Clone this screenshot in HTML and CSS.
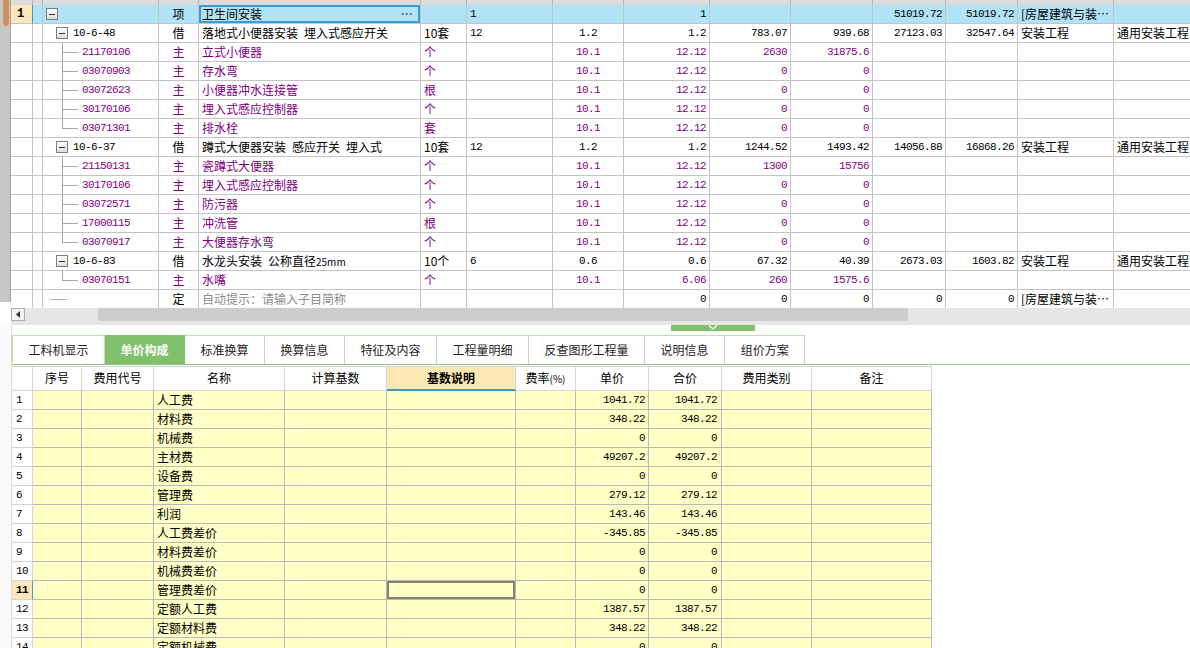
FILE: index.html
```html
<!DOCTYPE html>
<html lang="zh-CN">
<head>
<meta charset="utf-8">
<title>单价构成</title>
<link rel="stylesheet" href="styles.css">
</head>
<body>
<div class="top">
  <div class="vstrip"><div class="vthumb"></div></div>
  <div class="topmain">
    <div class="grid">
      <div class="ghead"><div></div><div></div><div></div><div></div><div></div><div></div><div></div><div></div><div></div><div></div><div></div><div></div><div></div><div></div><div></div></div>

      <div class="grow sel">
        <div class="c rn cur">1</div><div class="c"></div>
        <div class="c tree"><span class="box i1"></span></div>
        <div class="c ty">项</div>
        <div class="c nm edit"><span>卫生间安装</span><span class="dots">···</span></div>
        <div class="c"></div><div class="c num">1</div><div class="c"></div>
        <div class="c num r">1</div><div class="c"></div><div class="c"></div>
        <div class="c num r">51019.72</div><div class="c num r">51019.72</div>
        <div class="c">[房屋建筑与装…</div><div class="c"></div>
      </div>

      <div class="grow">
        <div class="c rn"></div><div class="c"></div>
        <div class="c tree"><span class="box i2"></span><span class="code">10-6-48</span></div>
        <div class="c ty">借</div>
        <div class="c">落地式小便器安装&ensp;埋入式感应开关</div>
        <div class="c">10套</div><div class="c num">12</div><div class="c num m">1.2</div>
        <div class="c num r">1.2</div><div class="c num r">783.07</div><div class="c num r">939.68</div>
        <div class="c num r">27123.03</div><div class="c num r">32547.64</div>
        <div class="c">安装工程</div><div class="c">通用安装工程</div>
      </div>

      <div class="grow sub">
        <div class="c rn"></div><div class="c"></div>
        <div class="c tree"><span class="br"></span><span class="code">21170106</span></div>
        <div class="c ty">主</div><div class="c">立式小便器</div><div class="c">个</div><div class="c"></div>
        <div class="c num m">10.1</div><div class="c num r">12.12</div><div class="c num r">2630</div><div class="c num r">31875.6</div>
        <div class="c"></div><div class="c"></div><div class="c"></div><div class="c"></div>
      </div>
      <div class="grow sub">
        <div class="c rn"></div><div class="c"></div>
        <div class="c tree"><span class="br"></span><span class="code">03070903</span></div>
        <div class="c ty">主</div><div class="c">存水弯</div><div class="c">个</div><div class="c"></div>
        <div class="c num m">10.1</div><div class="c num r">12.12</div><div class="c num r">0</div><div class="c num r">0</div>
        <div class="c"></div><div class="c"></div><div class="c"></div><div class="c"></div>
      </div>
      <div class="grow sub">
        <div class="c rn"></div><div class="c"></div>
        <div class="c tree"><span class="br"></span><span class="code">03072623</span></div>
        <div class="c ty">主</div><div class="c">小便器冲水连接管</div><div class="c">根</div><div class="c"></div>
        <div class="c num m">10.1</div><div class="c num r">12.12</div><div class="c num r">0</div><div class="c num r">0</div>
        <div class="c"></div><div class="c"></div><div class="c"></div><div class="c"></div>
      </div>
      <div class="grow sub">
        <div class="c rn"></div><div class="c"></div>
        <div class="c tree"><span class="br"></span><span class="code">30170106</span></div>
        <div class="c ty">主</div><div class="c">埋入式感应控制器</div><div class="c">个</div><div class="c"></div>
        <div class="c num m">10.1</div><div class="c num r">12.12</div><div class="c num r">0</div><div class="c num r">0</div>
        <div class="c"></div><div class="c"></div><div class="c"></div><div class="c"></div>
      </div>
      <div class="grow sub">
        <div class="c rn"></div><div class="c"></div>
        <div class="c tree"><span class="br last"></span><span class="code">03071301</span></div>
        <div class="c ty">主</div><div class="c">排水栓</div><div class="c">套</div><div class="c"></div>
        <div class="c num m">10.1</div><div class="c num r">12.12</div><div class="c num r">0</div><div class="c num r">0</div>
        <div class="c"></div><div class="c"></div><div class="c"></div><div class="c"></div>
      </div>

      <div class="grow">
        <div class="c rn"></div><div class="c"></div>
        <div class="c tree"><span class="box i2"></span><span class="code">10-6-37</span></div>
        <div class="c ty">借</div>
        <div class="c">蹲式大便器安装&ensp;感应开关&ensp;埋入式</div>
        <div class="c">10套</div><div class="c num">12</div><div class="c num m">1.2</div>
        <div class="c num r">1.2</div><div class="c num r">1244.52</div><div class="c num r">1493.42</div>
        <div class="c num r">14056.88</div><div class="c num r">16868.26</div>
        <div class="c">安装工程</div><div class="c">通用安装工程</div>
      </div>

      <div class="grow sub">
        <div class="c rn"></div><div class="c"></div>
        <div class="c tree"><span class="br"></span><span class="code">21150131</span></div>
        <div class="c ty">主</div><div class="c">瓷蹲式大便器</div><div class="c">个</div><div class="c"></div>
        <div class="c num m">10.1</div><div class="c num r">12.12</div><div class="c num r">1300</div><div class="c num r">15756</div>
        <div class="c"></div><div class="c"></div><div class="c"></div><div class="c"></div>
      </div>
      <div class="grow sub">
        <div class="c rn"></div><div class="c"></div>
        <div class="c tree"><span class="br"></span><span class="code">30170106</span></div>
        <div class="c ty">主</div><div class="c">埋入式感应控制器</div><div class="c">个</div><div class="c"></div>
        <div class="c num m">10.1</div><div class="c num r">12.12</div><div class="c num r">0</div><div class="c num r">0</div>
        <div class="c"></div><div class="c"></div><div class="c"></div><div class="c"></div>
      </div>
      <div class="grow sub">
        <div class="c rn"></div><div class="c"></div>
        <div class="c tree"><span class="br"></span><span class="code">03072571</span></div>
        <div class="c ty">主</div><div class="c">防污器</div><div class="c">个</div><div class="c"></div>
        <div class="c num m">10.1</div><div class="c num r">12.12</div><div class="c num r">0</div><div class="c num r">0</div>
        <div class="c"></div><div class="c"></div><div class="c"></div><div class="c"></div>
      </div>
      <div class="grow sub">
        <div class="c rn"></div><div class="c"></div>
        <div class="c tree"><span class="br"></span><span class="code">17000115</span></div>
        <div class="c ty">主</div><div class="c">冲洗管</div><div class="c">根</div><div class="c"></div>
        <div class="c num m">10.1</div><div class="c num r">12.12</div><div class="c num r">0</div><div class="c num r">0</div>
        <div class="c"></div><div class="c"></div><div class="c"></div><div class="c"></div>
      </div>
      <div class="grow sub">
        <div class="c rn"></div><div class="c"></div>
        <div class="c tree"><span class="br last"></span><span class="code">03070917</span></div>
        <div class="c ty">主</div><div class="c">大便器存水弯</div><div class="c">个</div><div class="c"></div>
        <div class="c num m">10.1</div><div class="c num r">12.12</div><div class="c num r">0</div><div class="c num r">0</div>
        <div class="c"></div><div class="c"></div><div class="c"></div><div class="c"></div>
      </div>

      <div class="grow">
        <div class="c rn"></div><div class="c"></div>
        <div class="c tree"><span class="box i2"></span><span class="code">10-6-83</span></div>
        <div class="c ty">借</div>
        <div class="c">水龙头安装&ensp;公称直径<span class="mm">25mm</span></div>
        <div class="c">10个</div><div class="c num">6</div><div class="c num m">0.6</div>
        <div class="c num r">0.6</div><div class="c num r">67.32</div><div class="c num r">40.39</div>
        <div class="c num r">2673.03</div><div class="c num r">1603.82</div>
        <div class="c">安装工程</div><div class="c">通用安装工程</div>
      </div>

      <div class="grow sub">
        <div class="c rn"></div><div class="c"></div>
        <div class="c tree"><span class="br last"></span><span class="code">03070151</span></div>
        <div class="c ty">主</div><div class="c">水嘴</div><div class="c">个</div><div class="c"></div>
        <div class="c num m">10.1</div><div class="c num r">6.06</div><div class="c num r">260</div><div class="c num r">1575.6</div>
        <div class="c"></div><div class="c"></div><div class="c"></div><div class="c"></div>
      </div>

      <div class="grow">
        <div class="c rn"></div><div class="c"></div>
        <div class="c tree"><span class="br top"></span></div>
        <div class="c ty">定</div>
        <div class="c hint">自动提示：请输入子目简称</div>
        <div class="c"></div><div class="c"></div><div class="c"></div>
        <div class="c num r">0</div><div class="c num r">0</div><div class="c num r">0</div>
        <div class="c num r">0</div><div class="c num r">0</div>
        <div class="c">[房屋建筑与装…</div><div class="c"></div>
      </div>
    </div>
    <div class="hscroll">
      <div class="arrow"><svg width="6" height="7" viewBox="0 0 6 7"><path d="M5 0 L1 3.5 L5 7 Z" fill="#333"/></svg></div>
      <div class="hthumb"></div>
    </div>
  </div>
</div>

<div class="bottom">
  <div class="lstrip"></div>
  <div class="bmain">
    <div class="splitter">
      <div class="handle"><svg width="10" height="5" viewBox="0 0 10 5"><path d="M1 0.5 L5 4 L9 0.5" fill="none" stroke="#fff" stroke-width="1.2"/></svg></div>
    </div>
    <div class="tabs">
      <div class="tab">工料机显示</div>
      <div class="tab active">单价构成</div>
      <div class="tab">标准换算</div>
      <div class="tab">换算信息</div>
      <div class="tab">特征及内容</div>
      <div class="tab">工程量明细</div>
      <div class="tab">反查图形工程量</div>
      <div class="tab">说明信息</div>
      <div class="tab">组价方案</div>
    </div>
    <div class="ptable">
      <div class="phead">
        <div class="h"></div><div class="h">序号</div><div class="h">费用代号</div><div class="h">名称</div><div class="h">计算基数</div><div class="h hsel">基数说明</div><div class="h">费率<span class="pct">(%)</span></div><div class="h">单价</div><div class="h">合价</div><div class="h">费用类别</div><div class="h">备注</div>
      </div>
      <div class="prow"><div class="c rn">1</div><div class="c"></div><div class="c"></div><div class="c">人工费</div><div class="c"></div><div class="c"></div><div class="c"></div><div class="c num r">1041.72</div><div class="c num r2">1041.72</div><div class="c"></div><div class="c"></div></div>
      <div class="prow"><div class="c rn">2</div><div class="c"></div><div class="c"></div><div class="c">材料费</div><div class="c"></div><div class="c"></div><div class="c"></div><div class="c num r">348.22</div><div class="c num r2">348.22</div><div class="c"></div><div class="c"></div></div>
      <div class="prow"><div class="c rn">3</div><div class="c"></div><div class="c"></div><div class="c">机械费</div><div class="c"></div><div class="c"></div><div class="c"></div><div class="c num r">0</div><div class="c num r2">0</div><div class="c"></div><div class="c"></div></div>
      <div class="prow"><div class="c rn">4</div><div class="c"></div><div class="c"></div><div class="c">主材费</div><div class="c"></div><div class="c"></div><div class="c"></div><div class="c num r">49207.2</div><div class="c num r2">49207.2</div><div class="c"></div><div class="c"></div></div>
      <div class="prow"><div class="c rn">5</div><div class="c"></div><div class="c"></div><div class="c">设备费</div><div class="c"></div><div class="c"></div><div class="c"></div><div class="c num r">0</div><div class="c num r2">0</div><div class="c"></div><div class="c"></div></div>
      <div class="prow"><div class="c rn">6</div><div class="c"></div><div class="c"></div><div class="c">管理费</div><div class="c"></div><div class="c"></div><div class="c"></div><div class="c num r">279.12</div><div class="c num r2">279.12</div><div class="c"></div><div class="c"></div></div>
      <div class="prow"><div class="c rn">7</div><div class="c"></div><div class="c"></div><div class="c">利润</div><div class="c"></div><div class="c"></div><div class="c"></div><div class="c num r">143.46</div><div class="c num r2">143.46</div><div class="c"></div><div class="c"></div></div>
      <div class="prow"><div class="c rn">8</div><div class="c"></div><div class="c"></div><div class="c">人工费差价</div><div class="c"></div><div class="c"></div><div class="c"></div><div class="c num r">-345.85</div><div class="c num r2">-345.85</div><div class="c"></div><div class="c"></div></div>
      <div class="prow"><div class="c rn">9</div><div class="c"></div><div class="c"></div><div class="c">材料费差价</div><div class="c"></div><div class="c"></div><div class="c"></div><div class="c num r">0</div><div class="c num r2">0</div><div class="c"></div><div class="c"></div></div>
      <div class="prow"><div class="c rn">10</div><div class="c"></div><div class="c"></div><div class="c">机械费差价</div><div class="c"></div><div class="c"></div><div class="c"></div><div class="c num r">0</div><div class="c num r2">0</div><div class="c"></div><div class="c"></div></div>
      <div class="prow"><div class="c rn cur">11</div><div class="c"></div><div class="c"></div><div class="c">管理费差价</div><div class="c"></div><div class="c focus"></div><div class="c"></div><div class="c num r">0</div><div class="c num r2">0</div><div class="c"></div><div class="c"></div></div>
      <div class="prow"><div class="c rn">12</div><div class="c"></div><div class="c"></div><div class="c">定额人工费</div><div class="c"></div><div class="c"></div><div class="c"></div><div class="c num r">1387.57</div><div class="c num r2">1387.57</div><div class="c"></div><div class="c"></div></div>
      <div class="prow"><div class="c rn">13</div><div class="c"></div><div class="c"></div><div class="c">定额材料费</div><div class="c"></div><div class="c"></div><div class="c"></div><div class="c num r">348.22</div><div class="c num r2">348.22</div><div class="c"></div><div class="c"></div></div>
      <div class="prow"><div class="c rn">14</div><div class="c"></div><div class="c"></div><div class="c">定额机械费</div><div class="c"></div><div class="c"></div><div class="c"></div><div class="c num r">0</div><div class="c num r2">0</div><div class="c"></div><div class="c"></div></div>
    </div>
  </div>
</div>
</body>
</html>
```

FILE: styles.css
```css
* { box-sizing: border-box; }
html, body { margin: 0; padding: 0; }
body {
  width: 1190px;
  height: 648px;
  overflow: hidden;
  background: #fff;
  color: #000;
  font-family: "Noto Sans CJK SC", "Noto Sans", sans-serif;
  font-size: 12px;
  line-height: 18px;
}

/* ---------- top pane ---------- */
.top { display: flex; height: 325px; }
.vstrip {
  width: 11px;
  height: 302px;
  flex: none;
  background: #c6c6c6;
  border-right: 1px solid #a4a4a4;
  padding-left: 3px;
}
.vthumb {
  width: 6px;
  height: 26px;
  border: 2px solid #ee8a3c;
  border-top: none;
  border-radius: 0 0 4px 4px;
  background: #9c9c9c;
}
.topmain { flex: 1; min-width: 0; display: flex; flex-direction: column; }
.grid { height: 308px; overflow: hidden; }

.ghead, .grow {
  display: grid;
  grid-template-columns: 22px 10px 116px 40px 222px 46px 86px 71px 86px 81px 82px 73px 72px 96px 86px;
}
.ghead { height: 5px; background: #dcdcdc; }
.ghead > div { border-right: 1px solid #b4b4b4; }
.grow { height: 19px; }
.grow > .c {
  border-right: 1px solid #c4c4c4;
  border-bottom: 1px solid #c4c4c4;
  padding: 0 3px;
  white-space: nowrap;
  overflow: hidden;
  line-height: 18px;
}
.grow.sel > .c { background: #b0e3f5; }
.grow.sel > .c.rn.cur {
  background: #fde6bc;
  border-right-color: #3f9fc4;
  font-weight: bold;
  padding-left: 6px;
  font-family: "Liberation Mono", monospace;
}
.grow.sel > .c.edit {
  box-shadow: inset 0 0 0 2px #3d9ad2;
  display: flex;
  justify-content: space-between;
  padding-right: 7px;
}
.dots {
  color: #2f6fae;
  font-family: "Liberation Sans", sans-serif;
  font-weight: bold;
  font-size: 12px;
  letter-spacing: 0;
}
.grow.sub > .c { color: #800080; }
.c.ty { text-align: center; }
.c.hint { color: #8c8c8c; }

.num {
  font-family: "Liberation Mono", "DejaVu Sans Mono", monospace;
  font-size: 11px;
  letter-spacing: -0.6px;
}
.num.r { text-align: right; }
.num.r2 { text-align: right; padding-right: 4px !important; }
.num.m { text-align: center; }
.mm { font-size: 10px; }
.pct { font-size: 10px; }

.c.tree { padding: 0; display: flex; align-items: center; }
.box {
  display: inline-block;
  width: 12px;
  height: 12px;
  border: 1px solid #7c7c7c;
  background:
    linear-gradient(#333, #333) center / 6px 1px no-repeat,
    linear-gradient(#ffffff, #dcdcdc);
  flex: none;
}
.box.i1 { margin-left: 3px; }
.box.i2 { margin-left: 13px; }
.box + .code { margin-left: 5px; }
.code {
  font-family: "Liberation Mono", "DejaVu Sans Mono", monospace;
  font-size: 11px;
  letter-spacing: -0.6px;
}
.br {
  align-self: stretch;
  flex: none;
  width: 20px;
  margin-left: 19px;
  background:
    linear-gradient(#a9a9a9, #a9a9a9) left top / 1px 100% no-repeat,
    linear-gradient(#a9a9a9, #a9a9a9) left 9px / 16px 1px no-repeat;
}
.br.last {
  background:
    linear-gradient(#a9a9a9, #a9a9a9) left top / 1px 10px no-repeat,
    linear-gradient(#a9a9a9, #a9a9a9) left 9px / 16px 1px no-repeat;
}
.br.top {
  margin-left: 8px;
  background: linear-gradient(#a9a9a9, #a9a9a9) left 9px / 16px 1px no-repeat;
}

.hscroll {
  height: 17px;
  background: #e6e6e6;
  display: flex;
  align-items: flex-start;
}
.arrow {
  width: 14px;
  height: 13px;
  border: 1px solid #adadad;
  background: #f4f4f4;
  display: flex;
  align-items: center;
  justify-content: center;
}
.hthumb {
  margin-left: 73px;
  width: 810px;
  height: 13px;
  background: #cdcdcd;
  border-radius: 2px;
}

/* ---------- bottom pane ---------- */
.bottom { display: flex; height: 323px; }
.lstrip { width: 12px; flex: none; background: #fafafa; border-right: 1px solid #dadada; }
.bmain { flex: 1; min-width: 0; }

.splitter { height: 10px; }
.handle {
  margin-left: 659px;
  width: 84px;
  height: 6px;
  background: #82c06e;
  display: flex;
  justify-content: center;
  align-items: flex-start;
}

.tabs {
  display: flex;
  height: 30px;
  border-bottom: 1px solid #98c98a;
  margin-bottom: 1px;
}
.tab {
  height: 29px;
  line-height: 28px;
  padding: 0 15.5px;
  border-top: 1px solid #c0e0b2;
  border-right: 1px solid #c0e0b2;
  color: #1e1e1e;
  white-space: nowrap;
}
.tab:first-child { border-left: 1px solid #c0e0b2; }
.tab.active {
  background: #80c26c;
  color: #fff;
  font-weight: bold;
  border-color: #80c26c;
}

.ptable { width: 920px; }
.phead, .prow {
  display: grid;
  grid-template-columns: 21px 49px 72px 131px 102px 129px 60px 73px 73px 90px 120px;
}
.phead { height: 25px; }
.phead > .h {
  border-top: 1px solid #d6d6d6;
  border-right: 1px solid #d6d6d6;
  border-bottom: 1px solid #d6d6d6;
  text-align: center;
  line-height: 22px;
  white-space: nowrap;
  overflow: hidden;
}
.phead > .h.hsel {
  background: #fce8b3;
  font-weight: bold;
  border-bottom: 2px solid #3c9cb8;
}
.prow { height: 19px; }
.prow > .c {
  background: #ffffc6;
  border-right: 1px solid #b9b9b9;
  border-bottom: 1px solid #b9b9b9;
  padding: 0 3px;
  line-height: 18px;
  white-space: nowrap;
  overflow: hidden;
}
.prow > .c.rn {
  background: #fff;
  border-color: #d4d4d4;
  padding-left: 4px;
  font-family: "Liberation Mono", "DejaVu Sans Mono", monospace;
  font-size: 11px;
  letter-spacing: -0.6px;
}
.prow > .c.rn.cur {
  background: #fde6bc;
  font-weight: bold;
  border-right: 1px solid #3f9fc4;
}
.prow > .c.focus { box-shadow: inset 0 0 0 2px #82826e; }
```
